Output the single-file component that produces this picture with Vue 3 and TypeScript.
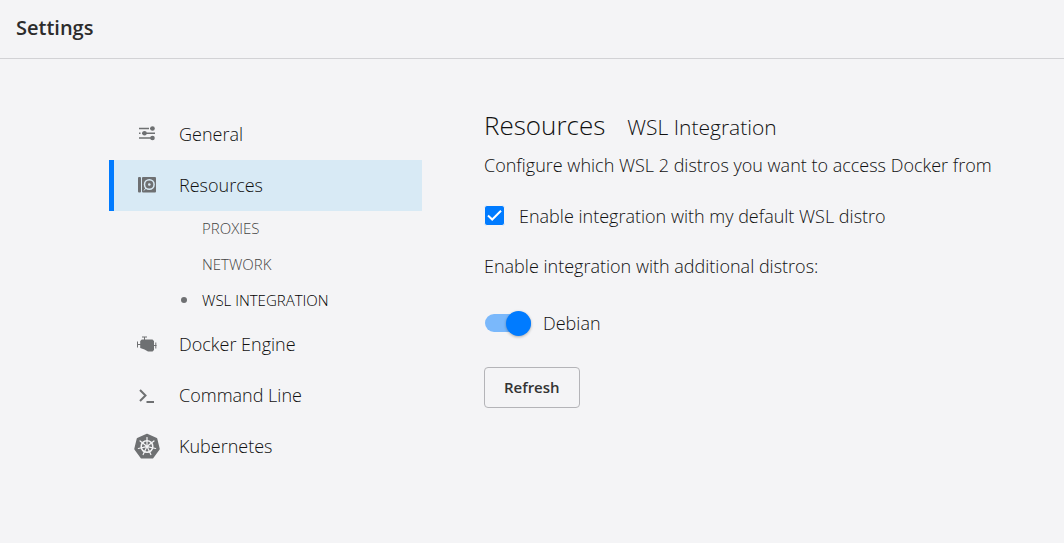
<script setup lang="ts">
import { ref } from 'vue'

const subItems = ['PROXIES', 'NETWORK', 'WSL INTEGRATION']
const activeSub = ref('WSL INTEGRATION')
const useDefault = ref(true)
const distros = ref([{ name: 'Debian', enabled: true }])

// Spoke angles of the Kubernetes wheel
const spokes = Array.from({ length: 7 }, (_, i) => (i * 360) / 7)
</script>

<template>
  <div class="app">
    <header class="topbar"><h1>Settings</h1></header>
    <div class="body">
      <nav class="nav" aria-label="Settings sections">
        <a class="item" href="#general">
          <svg class="icon" viewBox="0 0 28 28" aria-hidden="true">
            <path d="M6 8.500h10M6 13.300h1.500M9 13.300h13M6 18h10M17 8.500h3M16 18h4" stroke="currentColor" stroke-width="1.500" fill="none" />
            <circle cx="19.500" cy="8.500" r="2.300" fill="currentColor" />
            <circle cx="11.500" cy="13.300" r="2.300" fill="currentColor" />
            <circle cx="19.500" cy="18" r="2.300" fill="currentColor" />
          </svg>
          <span>General</span>
        </a>
        <a class="item active" href="#resources" aria-current="page">
          <svg class="icon" viewBox="0 0 28 28" aria-hidden="true">
            <rect x="5" y="6" width="3" height="15.500" rx="1" fill="currentColor" />
            <rect x="9" y="6" width="14" height="15.500" rx="1" fill="currentColor" />
            <circle cx="16.300" cy="13.500" r="4.800" fill="none" stroke="#d8eaf5" stroke-width="1.500" />
            <circle cx="16.300" cy="13.500" r="1.300" fill="#d8eaf5" />
            <path d="M11 19.500l2-2.500" stroke="#d8eaf5" stroke-width="1" />
          </svg>
          <span>Resources</span>
        </a>
        <ul class="sub">
          <li v-for="s in subItems" :key="s">
            <a href="#resources" :class="{ current: s === activeSub }" @click.prevent="activeSub = s">{{ s }}</a>
          </li>
        </ul>
        <a class="item" href="#engine">
          <svg class="icon" viewBox="0 0 28 28" aria-hidden="true">
            <path d="M7.200 11L8.800 9.500H19.500L21 11v9l-1.500 1.500H15L11.500 19.500 7.200 18z" fill="currentColor" />
            <path d="M4.500 11.500v6M4.500 14.500H8M9 7h5M11.500 7v3M20.500 15.500h3M22.800 12.500v6" fill="none" stroke="currentColor" stroke-width="1" />
          </svg>
          <span>Docker Engine</span>
        </a>
        <a class="item" href="#cli">
          <svg class="icon" viewBox="0 0 28 28" aria-hidden="true">
            <path d="M7 9l5.500 5.500L7 20M13.500 21H21" fill="none" stroke="currentColor" stroke-width="2" />
          </svg>
          <span>Command Line</span>
        </a>
        <a class="item" href="#kubernetes">
          <svg class="icon" viewBox="0 0 28 28" aria-hidden="true">
            <path d="M14 2.500L23.500 6.700 26 17 19.600 25.700H8.400L2 17 4.500 6.700z" fill="currentColor" stroke="currentColor" stroke-width="1.500" stroke-linejoin="round" />
            <g fill="none" stroke="#f4f4f6" stroke-width="1.200" stroke-linecap="round">
              <circle cx="14" cy="14.500" r="5.800" stroke-width="1.500" />
              <path v-for="a in spokes" :key="a" d="M14 13V5.600" :transform="`rotate(${a} 14 14.500)`" />
            </g>
            <circle cx="14" cy="14.500" r="1.600" fill="#f4f4f6" />
          </svg>
          <span>Kubernetes</span>
        </a>
      </nav>

      <main class="content">
        <h2>Resources <small>WSL Integration</small></h2>
        <p class="intro">Configure which WSL 2 distros you want to access Docker from</p>
        <label class="check">
          <input v-model="useDefault" type="checkbox" />
          <span>Enable integration with my default WSL distro</span>
        </label>
        <p class="more">Enable integration with additional distros:</p>
        <label v-for="d in distros" :key="d.name" class="toggle">
          <input v-model="d.enabled" type="checkbox" role="switch" />
          <span>{{ d.name }}</span>
        </label>
        <button type="button" class="refresh">Refresh</button>
      </main>
    </div>
  </div>
</template>

<style>
body {
  background: #f4f4f6;
}
</style>

<style scoped>
.app {
  font-family: "Open Sans", "Noto Sans", sans-serif;
  font-size: 18px;
  font-weight: 300;
  line-height: 24px;
  color: #111;
}
.app * {
  box-sizing: border-box;
}
.topbar {
  padding: 14px 16px 16px;
  border-bottom: 1px solid #d2d2d5;
}
h1 {
  margin: 0;
  font-size: 20px;
  line-height: 28px;
  font-weight: 600;
  color: #2c2c2c;
}
.body {
  display: grid;
  grid-template-columns: minmax(240px, 313px) minmax(0, 1fr);
  column-gap: 62px;
  padding: 50px 40px 50px 109px;
}
.item {
  display: flex;
  align-items: center;
  gap: 18px;
  height: 51px;
  padding: 0 0 2px 19px;
  border-left: 5px solid transparent;
  color: #111;
  text-decoration: none;
}
.item.active {
  background: #d8eaf5;
  border-left-color: #007bff;
}
.icon {
  flex: none;
  width: 28px;
  height: 28px;
  color: #6e7072;
}
.sub {
  list-style: none;
  margin: 0;
  padding: 0 0 0 93px;
}
.sub a {
  display: flex;
  align-items: center;
  position: relative;
  height: 36px;
  padding-bottom: 2px;
  font-size: 15px;
  color: #444;
  text-decoration: none;
}
.sub .current {
  color: #000;
}
.sub .current::before {
  content: "";
  position: absolute;
  left: -21px;
  width: 6px;
  height: 6px;
  border-radius: 50%;
  background: #6e7072;
}
.content {
  display: flex;
  flex-direction: column;
  align-items: flex-start;
}
h2 {
  display: flex;
  align-items: baseline;
  gap: 22px;
  margin: 0;
  font-size: 26px;
  line-height: 32px;
  font-weight: 300;
}
small {
  font-size: 21px;
}
p {
  margin: 0;
}
.intro {
  margin-top: 10px;
}
.check,
.toggle {
  display: flex;
  align-items: center;
}
.check {
  align-items: flex-start;
  gap: 14px;
  margin-top: 27px;
}
.more {
  margin-top: 26px;
}
input {
  appearance: none;
  flex: none;
  margin: 0;
}
.check input {
  width: 21px;
  height: 21px;
  margin-top: 1px;
  border: 1px solid #f4f4f6;
  border-radius: 3px;
  box-shadow: inset 0 0 0 2px #777;
}
.check input:checked {
  box-shadow: none;
  background: #007bff url("data:image/svg+xml,%3Csvg xmlns='http://www.w3.org/2000/svg' viewBox='0 0 19 19'%3E%3Cpath d='M3 9.500l4.200 4L16 4.700' fill='none' stroke='white' stroke-width='2'/%3E%3C/svg%3E") center / 19px 19px;
}
.toggle {
  gap: 12px;
  margin-top: 33px;
}
.toggle input {
  position: relative;
  width: 46px;
  height: 18px;
  margin-left: 1px;
  border-radius: 9px;
  background: #bbb;
}
.toggle input::before {
  content: "";
  position: absolute;
  top: -3px;
  left: 0;
  width: 25px;
  height: 25px;
  border-radius: 50%;
  background: #fff;
  box-shadow: 0 1px 3px rgba(0, 0, 0, 0.3);
}
.toggle input:checked {
  background: #7ab8fb;
}
.toggle input:checked::before {
  left: 21px;
  background: #007bff;
}
.refresh {
  margin-top: 32px;
  padding: 8px 19px;
  border: 1px solid #b4b4b8;
  border-radius: 4px;
  background: transparent;
  font: 600 15px/23px "Open Sans", "Noto Sans", sans-serif;
  color: #333;
}
</style>
